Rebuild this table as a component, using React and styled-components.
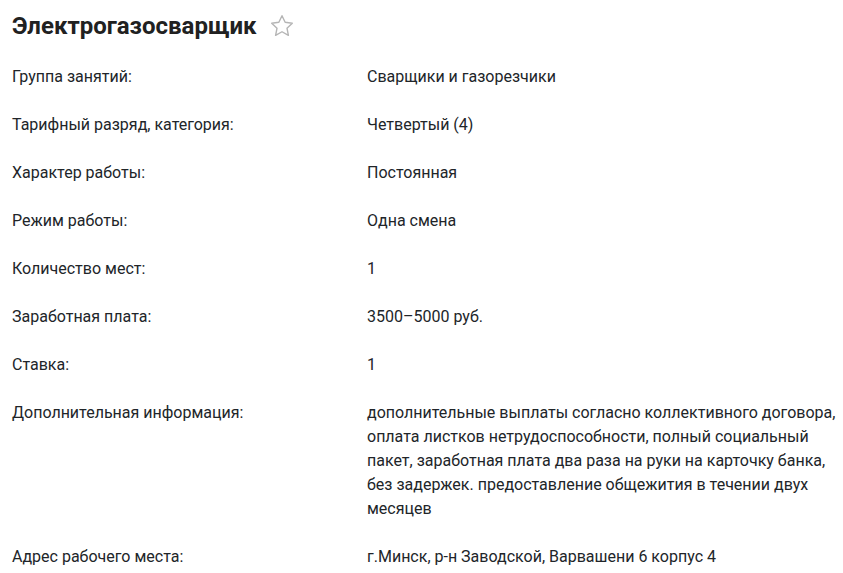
import React from "react";
import styled, { createGlobalStyle } from "styled-components";

const Global = createGlobalStyle`
  html, body { margin: 0; padding: 0; background: #fff; }
  body { font-family: Roboto, "Noto Sans", Arial, sans-serif; color: #212529; }
`;

const Page = styled.div`
  padding: 10px 0 0 12px;
`;

const TitleRow = styled.div`
  display: flex;
  align-items: center;
  gap: 12px;
  height: 32px;
`;

const Title = styled.h1`
  margin: 0;
  font-size: 24px;
  font-weight: 700;
  line-height: 32px;
  color: #212121;
`;

const StarButton = styled.span`
  display: inline-flex;
  width: 26px;
  height: 26px;
  color: #b5b5b5;
`;

const Details = styled.dl`
  margin: 23px 0 0;
  display: grid;
  grid-template-columns: 355px 1fr;
  row-gap: 24px;
  font-size: 16px;
  line-height: 24px;
`;

const Label = styled.dt`
  margin: 0;
  color: #212529;
`;

const Value = styled.dd`
  margin: 0;
  color: #212529;
  max-width: 474px;
`;

const rows = [
  ["Группа занятий:", "Сварщики и газорезчики"],
  ["Тарифный разряд, категория:", "Четвертый (4)"],
  ["Характер работы:", "Постоянная"],
  ["Режим работы:", "Одна смена"],
  ["Количество мест:", "1"],
  ["Заработная плата:", "3500–5000 руб."],
  ["Ставка:", "1"],
  [
    "Дополнительная информация:",
    "дополнительные выплаты согласно коллективного договора, оплата листков нетрудоспособности, полный социальный пакет, заработная плата два раза на руки на карточку банка, без задержек. предоставление общежития в течении двух месяцев",
  ],
  ["Адрес рабочего места:", "г.Минск, р-н Заводской, Варвашени 6 корпус 4"],
];

export default function App() {
  return (
    <Page>
      <Global />
      <TitleRow>
        <Title>Электрогазосварщик</Title>
        <StarButton>
          <svg viewBox="0 0 24 24" width="26" height="26" fill="none" stroke="currentColor" strokeWidth="1.3" strokeLinejoin="round">
            <path d="M12 2.5l2.9 6.1 6.6.8-4.9 4.6 1.3 6.6L12 17.3l-5.9 3.3 1.3-6.6-4.9-4.6 6.6-.8z" />
          </svg>
        </StarButton>
      </TitleRow>
      <Details>
        {rows.map(([l, v]) => (
          <React.Fragment key={l}>
            <Label>{l}</Label>
            <Value>{v}</Value>
          </React.Fragment>
        ))}
      </Details>
    </Page>
  );
}
